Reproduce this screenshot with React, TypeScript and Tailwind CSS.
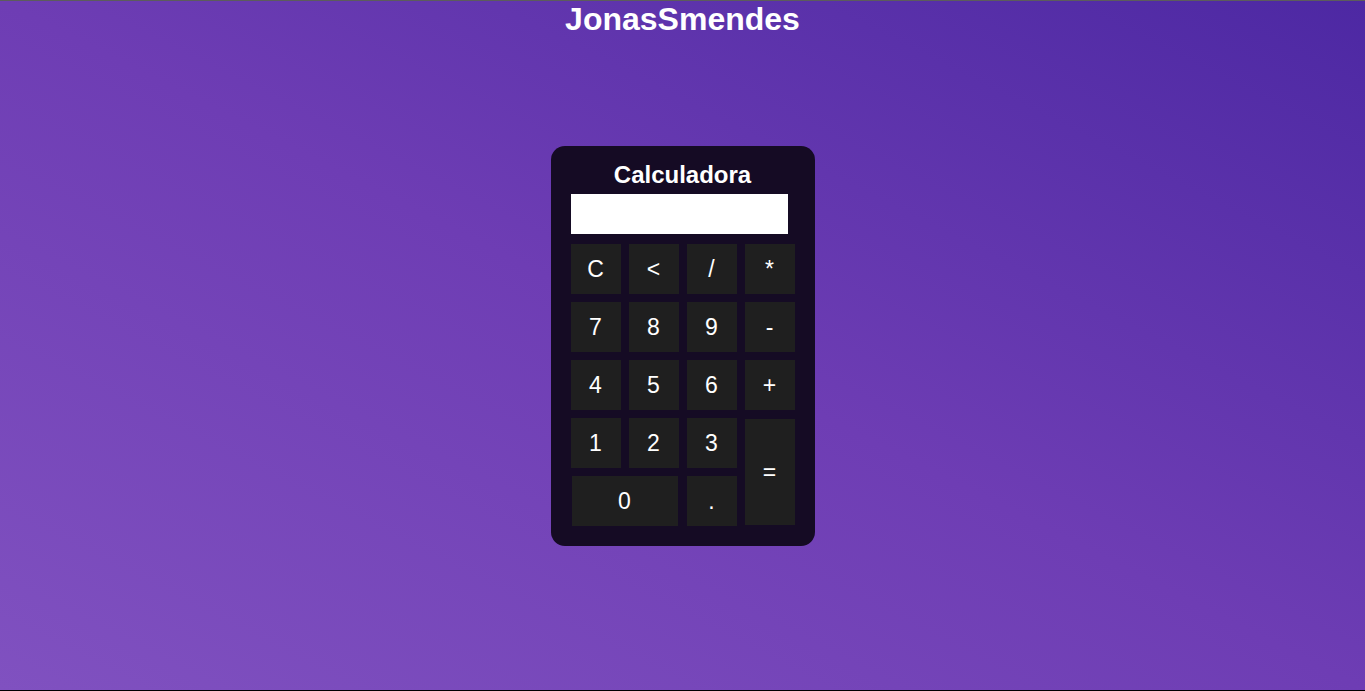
import React from "react";

const btn =
  "flex items-center justify-center bg-[#1f1f1f] text-white text-[23px] w-[50px] h-[50px]";

export default function App() {
  const font = { fontFamily: '"Liberation Sans", Arial, sans-serif' };
  return (
    <div
      className="relative w-full h-[691px] overflow-hidden bg-linear-to-tr from-[#8051c0] via-[#6e3db4] to-[#4d28a3] border-t border-t-[#5c5c5c] border-b border-b-black"
      style={font}
    >
      <h1 className="text-center text-white font-bold text-[32px] leading-[36px]">
        JonasSmendes
      </h1>
      <div className="flex justify-center mt-[109px]">
        <div className="w-[264px] h-[400px] rounded-[14px] bg-[#150b24] px-[20px] pt-[15px] flex flex-col">
          <h2 className="text-center text-white font-bold text-[24px] leading-[28px]">
            Calculadora
          </h2>
          <div className="mt-[5px] w-[217px] h-[40px] bg-white" />
          <div className="mt-[10px] grid grid-cols-[50px_50px_50px_50px] gap-[8px]">
            <button className={btn}>C</button>
            <button className={btn}>&lt;</button>
            <button className={btn}>/</button>
            <button className={btn}>*</button>
            <button className={btn}>7</button>
            <button className={btn}>8</button>
            <button className={btn}>9</button>
            <button className={btn}>-</button>
            <button className={btn}>4</button>
            <button className={btn}>5</button>
            <button className={btn}>6</button>
            <button className={btn}>+</button>
            <button className={btn}>1</button>
            <button className={btn}>2</button>
            <button className={btn}>3</button>
            <button className="row-span-2 flex items-center justify-center bg-[#1f1f1f] text-white text-[23px] w-[50px] h-[106px] mt-[1px]">
              =
            </button>
            <button className="col-span-2 flex items-center justify-center bg-[#1f1f1f] text-white text-[23px] w-[106px] h-[50px] ml-[1px]">
              0
            </button>
            <button className={btn}>.</button>
          </div>
        </div>
      </div>
    </div>
  );
}
